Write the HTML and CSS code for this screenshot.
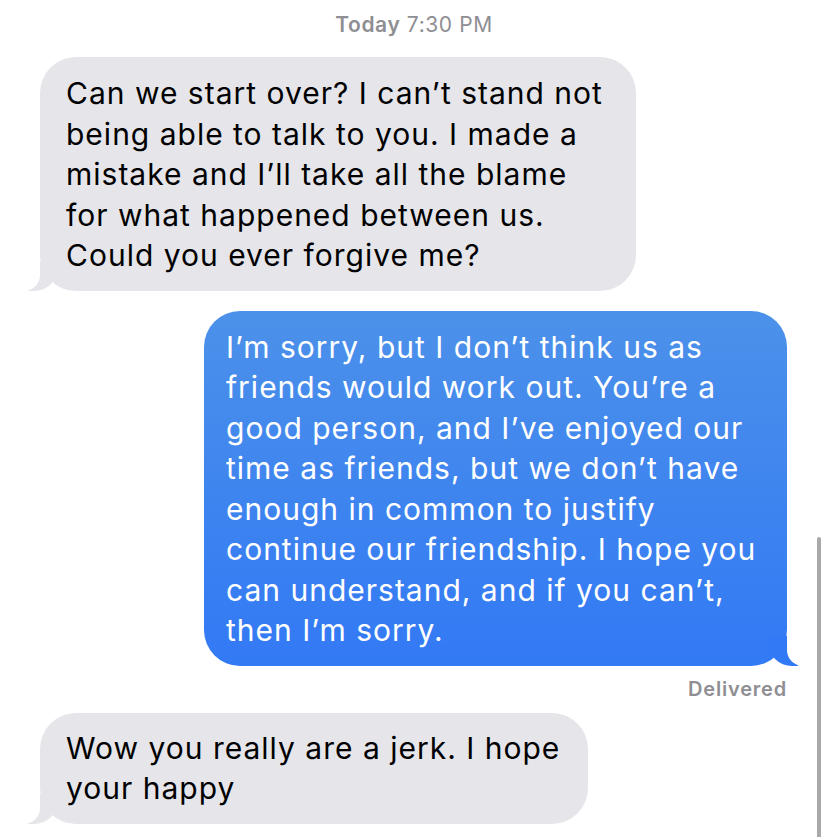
FILE: index.html
```html
<!DOCTYPE html>
<html>
<head>
<meta charset="utf-8">
<link rel="stylesheet" href="styles.css">
</head>
<body>
<div class="thread">
  <div class="stamp"><b>Today</b> 7:30 PM</div>
  <div class="bubble received b1">Can we start over? I can’t stand not<br>being able to talk to you. I made a<br>mistake and I’ll take all the blame<br>for what happened between us.<br>Could you ever forgive me?</div>
  <div class="bubble sent b2">I’m sorry, but I don’t think us as<br>friends would work out. You’re a<br>good person, and I’ve enjoyed our<br>time as friends, but we don’t have<br>enough in common to justify<br>continue our friendship. I hope you<br>can understand, and if you can’t,<br>then I’m sorry.</div>
  <div class="status">Delivered</div>
  <div class="bubble received b3">Wow you really are a jerk. I hope<br>your happy</div>
</div>
<div class="scroll-indicator"></div>
</body>
</html>
```
FILE: styles.css
```css
html, body {
  margin: 0;
  padding: 0;
  background: #fff;
  height: 100%;
  overflow: hidden;
}
body {
  font-family: Inter, "Liberation Sans", sans-serif;
  position: relative;
}
.thread {
  display: flex;
  flex-direction: column;
  padding: 0 40px 0 40px;
}
.stamp {
  align-self: center;
  color: #8e8e93;
  font-size: 21px;
  letter-spacing: 0.6px;
  line-height: 26px;
  margin-top: 12px;
}
.stamp b { font-weight: 600; }
.bubble {
  position: relative;
  box-sizing: border-box;
  font-size: 30px;
  line-height: 40.5px;
  letter-spacing: 1px;
  border-radius: 36px;
  padding: 16px 18px 15px 26px;
}
.received {
  align-self: flex-start;
  background: #e5e5ea;
  color: #000;
}
.sent {
  align-self: flex-end;
  background: linear-gradient(#4c91e9, #3279f5);
  color: #fff;
}
.b1 { width: 596px; margin-top: 19px; }
.b2 { width: 583px; margin-top: 20px; margin-right: 1px; padding-left: 22px; }
.b3 { width: 548px; margin-top: 12px; padding-top: 15px; padding-bottom: 15px; }
.status {
  align-self: flex-end;
  color: #8e8e93;
  font-size: 20px;
  font-weight: 600;
  letter-spacing: 0.8px;
  line-height: 24px;
  margin-top: 11px;
  margin-right: 1px;
}
.received::before {
  content: "";
  position: absolute;
  bottom: 0;
  left: -12px;
  width: 30px;
  height: 30px;
  background: #e5e5ea;
  border-bottom-right-radius: 24px;
}
.received::after {
  content: "";
  position: absolute;
  bottom: 0;
  left: -18px;
  width: 18px;
  height: 32px;
  background: #fff;
  border-bottom-right-radius: 16px;
}
.sent::before {
  content: "";
  position: absolute;
  bottom: 0;
  right: -11px;
  width: 30px;
  height: 30px;
  background: #3279f5;
  border-bottom-left-radius: 24px;
}
.sent::after {
  content: "";
  position: absolute;
  bottom: 0;
  right: -17px;
  width: 17px;
  height: 32px;
  background: #fff;
  border-bottom-left-radius: 16px;
}
.scroll-indicator {
  position: absolute;
  left: 817px;
  top: 537px;
  width: 4px;
  height: 320px;
  border-radius: 2px;
  background: #a9a9ab;
}
```
